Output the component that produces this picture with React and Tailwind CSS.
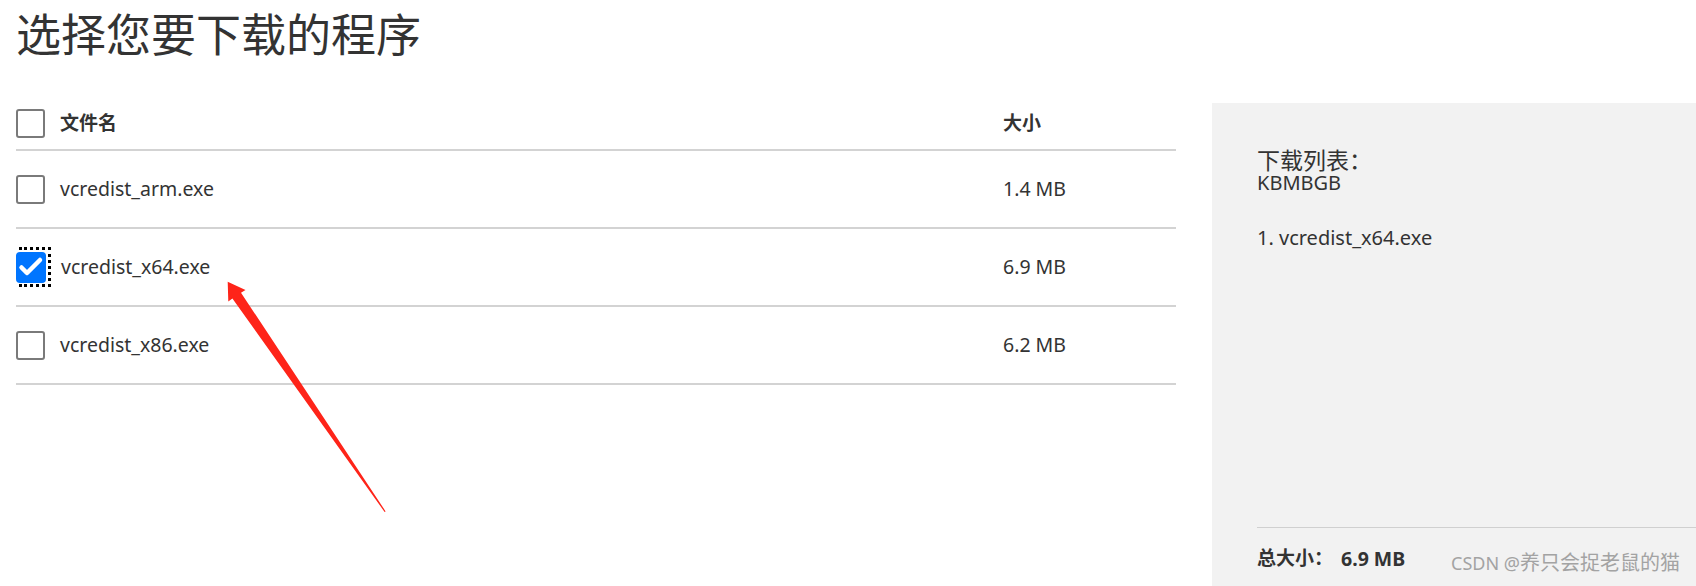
import React from "react";

function Box({ checked }) {
  if (checked) {
    return (
      <div className="relative w-[30px] h-[31px] shrink-0">
        <div className="absolute left-[3px] top-[-5px] w-[32px] h-[40px] border-[3px] border-dotted border-black" />
        <div className="absolute inset-0 rounded-[4px] bg-[#0075ff] flex items-center justify-center">
          <svg width="30" height="31" viewBox="0 0 30 31">
            <path d="M5.5 15.5 L11 21 L24 8" fill="none" stroke="#fff" strokeWidth="4.5" strokeLinecap="round" strokeLinejoin="round" />
          </svg>
        </div>
      </div>
    );
  }
  return <div className="w-[29px] h-[29px] shrink-0 rounded-[3px] border-2 border-[#7a7a7a] bg-white" />;
}

const rows = [
  { name: "vcredist_arm.exe", size: "1.4 MB", checked: false },
  { name: "vcredist_x64.exe", size: "6.9 MB", checked: true },
  { name: "vcredist_x86.exe", size: "6.2 MB", checked: false },
];

export default function App() {
  return (
    <div className="relative w-[1696px] h-[586px] overflow-hidden bg-white text-[#333333] font-['Noto_Sans','Noto_Sans_CJK_SC',sans-serif]">
      <div className="flex items-start">
        <div className="w-[1176px] pl-[16px] shrink-0">
          <div className="h-[97px] pt-[10px]">
            <h1 className="text-[45px] leading-none font-normal text-[#333333] font-['Noto_Sans_CJK_SC',sans-serif]">选择您要下载的程序</h1>
          </div>
          <div className="flex items-center h-[54px] border-b-2 border-[#d3d3d3]">
            <Box />
            <div className="ml-[15px] flex-1 text-[19px] font-bold">文件名</div>
            <div className="w-[173px] text-[19px] font-bold">大小</div>
          </div>
          {rows.map((r) => (
            <div key={r.name} className="flex items-center h-[78px] border-b-2 border-[#d3d3d3]">
              <Box checked={r.checked} />
              <div className="ml-[15px] flex-1 text-[19.5px]">{r.name}</div>
              <div className="w-[173px] text-[19.5px]">{r.size}</div>
            </div>
          ))}
        </div>
        <div className="ml-[36px] mt-[103px] w-[484px] h-[483px] bg-[#f2f2f2] flex flex-col shrink-0">
          <div className="pl-[45px] pt-[45px] text-[20px]">
            <div className="leading-[24px] text-[23px]">下载列表：</div>
            <div className="leading-[21px]">KBMBGB</div>
            <div className="mt-[33px] leading-[24px]">1. vcredist_x64.exe</div>
          </div>
          <div className="flex-1" />
          <div className="ml-[45px] h-[59px] border-t border-[#d0d0d0] flex items-center pt-[3px]">
            <span className="text-[19px] font-bold">总大小：</span>
            <span className="ml-[8px] text-[19.5px] font-bold">6.9 MB</span>
          </div>
        </div>
      </div>

      <div className="absolute right-[16px] bottom-[8px] text-[18px] text-[#a3a3a3] font-['Noto_Sans','Noto_Sans_CJK_SC',sans-serif]">
        CSDN @<span className="text-[20px]">养只会捉老鼠的猫</span>
      </div>

      <svg className="absolute left-0 top-0 pointer-events-none" width="1696" height="586" viewBox="0 0 1696 586">
        <polygon
          points="227.7,281.7 245.5,290 241,292.7 385.6,511.4 384.6,512 232.4,298.5 228.3,301.5"
          fill="#fe2419"
        />
      </svg>
    </div>
  );
}
